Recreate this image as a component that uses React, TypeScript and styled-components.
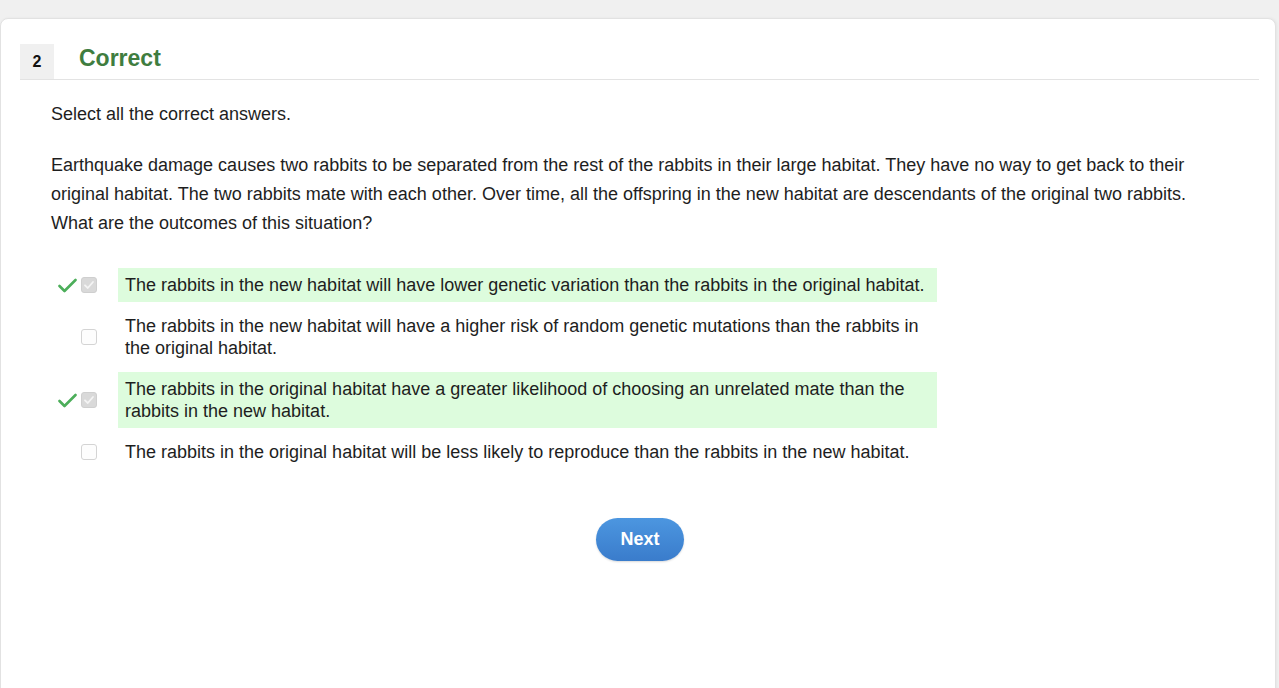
import React from "react";
import styled, { createGlobalStyle } from "styled-components";

const Global = createGlobalStyle`
  html, body { margin: 0; padding: 0; background: #f0f0f0; }
  body { font-family: "Liberation Sans", Arial, sans-serif; color: #222; }
`;

const Card = styled.div`
  margin: 18px 3px 0 0;
  background: #fff;
  border: 1px solid #e2e2e2;
  border-radius: 8px;
  min-height: 690px;
  padding: 25px 16px 0 19px;
  box-sizing: border-box;
  box-shadow: 1px 0 3px rgba(0,0,0,0.05);
`;

const Header = styled.div`
  display: flex;
  align-items: center;
  border-bottom: 1px solid #e3e3e3;
`;

const Num = styled.div`
  width: 34px;
  height: 35px;
  background: #f0f0f0;
  display: flex;
  align-items: center;
  justify-content: center;
  font-weight: bold;
  font-size: 16px;
  color: #111;
`;

const Title = styled.h2`
  margin: 0 0 0 25px;
  font-size: 23px;
  font-weight: bold;
  color: #3f7d3f;
  line-height: 35px;
  position: relative;
  top: -3px;
`;

const Body = styled.div`
  padding: 20px 34px 0 31px;
`;

const Para = styled.p<{ $top: number }>`
  margin: ${(p) => p.$top}px 0 0 0;
  font-size: 18px;
  line-height: 29px;
  color: #1e1e1e;
`;

const Options = styled.div`
  margin-top: 30px;
  display: flex;
  flex-direction: column;
  gap: 7px;
`;

const Row = styled.div`
  display: flex;
  align-items: center;
`;

const Marker = styled.div`
  width: 67px;
  display: flex;
  align-items: center;
  padding-left: 7px;
  box-sizing: border-box;
  gap: 4px;
`;

const MarkSlot = styled.div`
  width: 19px;
  height: 16px;
  display: flex;
  align-items: center;
  justify-content: center;
`;

const Box = styled.div<{ $checked: boolean }>`
  width: 16px;
  height: 16px;
  box-sizing: border-box;
  border-radius: 3px;
  border: 1px solid ${(p) => (p.$checked ? "#cfcfcf" : "#d4d4d4")};
  background: ${(p) => (p.$checked ? "#d9d9d9" : "#fdfdfd")};
  display: flex;
  align-items: center;
  justify-content: center;
`;

const Answer = styled.div<{ $correct: boolean }>`
  width: 819px;
  box-sizing: border-box;
  padding: 6px 7px;
  font-size: 18px;
  line-height: 22px;
  color: #1e1e1e;
  background: ${(p) => (p.$correct ? "#ddfcdd" : "transparent")};
`;

const Footer = styled.div`
  display: flex;
  justify-content: center;
  margin-top: 49px;
  padding-left: 4px;
`;

const NextButton = styled.button`
  width: 88px;
  height: 43px;
  border: none;
  border-radius: 22px;
  background: linear-gradient(#4c96e0, #3a7ccb);
  color: #fff;
  font-family: "Liberation Sans", Arial, sans-serif;
  font-weight: bold;
  font-size: 18px;
  box-shadow: 0 1px 2px rgba(0,0,0,0.15);
`;

const GreenCheck = () => (
  <svg width="19" height="15" viewBox="0 0 19 15">
    <path d="M1.5 8 L6.5 13 L17.5 2" fill="none" stroke="#4cae5a" strokeWidth="2.6" strokeLinecap="round" strokeLinejoin="round" />
  </svg>
);

const BoxTick = () => (
  <svg width="12" height="12" viewBox="0 0 12 12">
    <path d="M2 6.3 L4.8 9 L10 3" fill="none" stroke="#f4f4f4" strokeWidth="1.8" strokeLinecap="round" strokeLinejoin="round" />
  </svg>
);

const options = [
  { text: "The rabbits in the new habitat will have lower genetic variation than the rabbits in the original habitat.", checked: true },
  { text: "The rabbits in the new habitat will have a higher risk of random genetic mutations than the rabbits in the original habitat.", checked: false },
  { text: "The rabbits in the original habitat have a greater likelihood of choosing an unrelated mate than the rabbits in the new habitat.", checked: true },
  { text: "The rabbits in the original habitat will be less likely to reproduce than the rabbits in the new habitat.", checked: false },
];

export default function App() {
  return (
    <>
      <Global />
      <Card>
        <Header>
          <Num>2</Num>
          <Title>Correct</Title>
        </Header>
        <Body>
          <Para $top={0}>Select all the correct answers.</Para>
          <Para $top={22}>
            Earthquake damage causes two rabbits to be separated from the rest of the rabbits in their large habitat. They have no way to get back to their original habitat. The two rabbits mate with each other. Over time, all the offspring in the new habitat are descendants of the original two rabbits. What are the outcomes of this situation?
          </Para>
          <Options>
            {options.map((o, i) => (
              <Row key={i}>
                <Marker>
                  <MarkSlot>{o.checked && <GreenCheck />}</MarkSlot>
                  <Box $checked={o.checked}>{o.checked && <BoxTick />}</Box>
                </Marker>
                <Answer $correct={o.checked}>{o.text}</Answer>
              </Row>
            ))}
          </Options>
          <Footer>
            <NextButton>Next</NextButton>
          </Footer>
        </Body>
      </Card>
    </>
  );
}
